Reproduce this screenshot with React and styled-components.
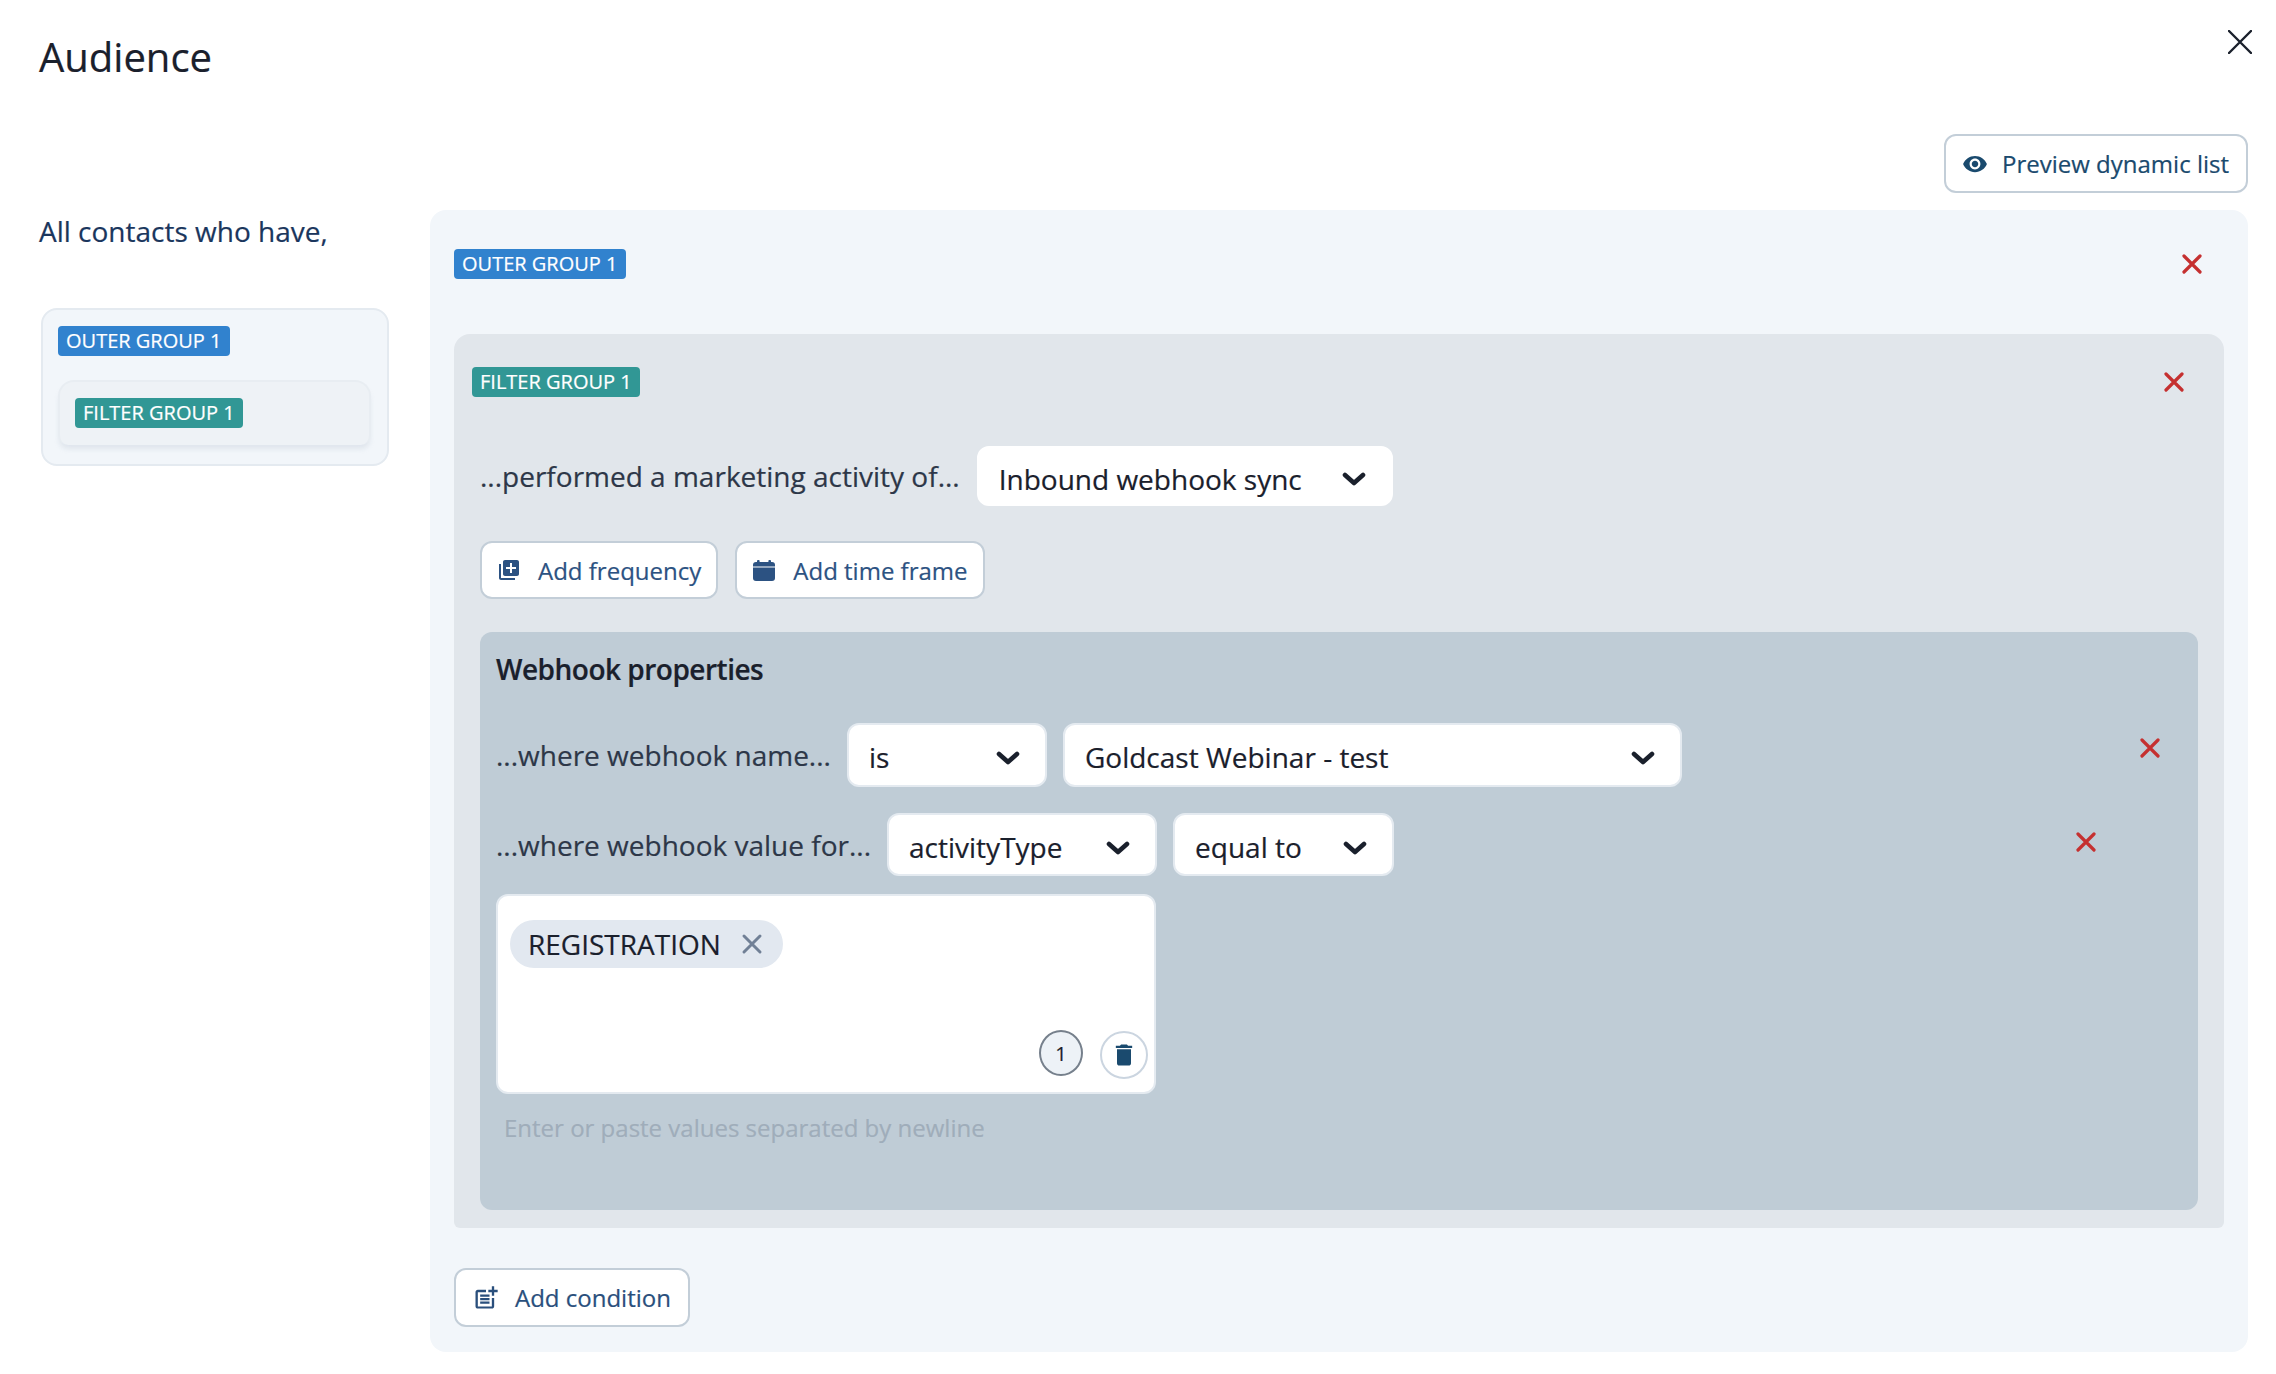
import React from 'react';
import styled, { createGlobalStyle } from 'styled-components';
import { MdLibraryAdd, MdOutlinePostAdd, MdDelete, MdRemoveRedEye } from 'react-icons/md';

const Global = createGlobalStyle`
  html, body { margin: 0; padding: 0; background: #fff; }
  body {
    font-family: "Open Sans", "Noto Sans", sans-serif;
    color: #2d3748;
    -webkit-text-stroke: 0.2px currentColor;
  }
  * { box-sizing: border-box; }
`;

const Page = styled.div`
  position: relative;
  width: 2276px;
  height: 1374px;
  padding: 30px 28px 22px 39px;
  overflow: hidden;
`;
const Title = styled.h1`
  margin: 0;
  font-size: 40px;
  line-height: 54px;
  font-weight: 500;
  color: #1a202c;
`;
const CloseButton = styled.button`
  position: absolute;
  top: 30px;
  right: 24px;
  width: 24px;
  height: 24px;
  padding: 0;
  border: 0;
  background: none;
  color: #1a202c;
  display: flex;
`;
const Toolbar = styled.div`
  display: flex;
  justify-content: flex-end;
  margin: 50px 0 17px;
`;
const OutlineButton = styled.button`
  display: inline-flex;
  align-items: center;
  height: ${p => p.$h || 59}px;
  padding: 0 ${p => p.$right || 15}px 0 ${p => p.$left || 15}px;
  border: 2px solid #c3ced8;
  border-radius: 12px;
  background: #fff;
  font-family: inherit;
  font-size: 24px;
  font-weight: ${p => p.$weight || 400};
  color: ${p => p.$color || '#2c5282'};
  white-space: nowrap;
  svg { flex: none; }
`;
const IconGap = styled.span`
  display: inline-flex;
  margin-right: ${p => p.$gap}px;
`;
const Columns = styled.div`
  display: flex;
  gap: 41px;
`;
const Sidebar = styled.aside`
  flex: none;
  width: 350px;
  padding-top: 2px;
`;
const Lead = styled.p`
  margin: 0 0 58px;
  font-size: 28px;
  line-height: 38px;
  font-weight: 500;
  color: #1a365d;
`;
const SummaryCard = styled.div`
  margin-left: 2px;
  height: 158px;
  padding: 16px 16px 0 15px;
  background: #f2f6fa;
  border: 2px solid #e4eaf0;
  border-radius: 16px;
`;
const SummaryFilter = styled.div`
  margin-top: 24px;
  height: 65px;
  padding: 16px 15px;
  background: #eef2f6;
  border: 2px solid #e8edf2;
  border-bottom: 0;
  border-radius: 16px 16px 10px 10px;
  box-shadow: 0 5px 5px -1px rgba(160, 175, 190, 0.22);
`;
const Tag = styled.span`
  display: inline-flex;
  align-items: center;
  height: 30px;
  padding: 0 8px 2px;
  border-radius: 4px;
  background: ${p => p.$bg};
  color: #fff;
  font-size: 20px;
  font-weight: 500;
  white-space: nowrap;
`;
const MainPanel = styled.main`
  flex: 1;
  height: 1142px;
  padding: 39px 24px 25px;
  background: #f2f6fa;
  border-radius: 16px;
`;
const PanelHead = styled.div`
  display: flex;
  align-items: center;
  justify-content: space-between;
  padding-right: ${p => p.$right}px;
`;
const RemoveIcon = styled.svg`
  flex: none;
  width: 20px;
  height: 20px;
  color: #c53030;
`;
const FilterPanel = styled.section`
  margin-top: 55px;
  padding: 33px 26px 18px 18px;
  background: #e1e6eb;
  border-radius: 16px 16px 6px 6px;
`;
const FilterBody = styled.div`
  padding-left: 8px;
`;
const ActivityRow = styled.div`
  display: flex;
  align-items: center;
  gap: 17px;
  margin-top: 49px;
`;
const Label = styled.span`
  font-size: 28px;
  line-height: 38px;
  color: #2d3748;
  white-space: nowrap;
`;
const SelectBox = styled.div`
  flex: none;
  display: flex;
  align-items: center;
  justify-content: space-between;
  width: ${p => p.$w}px;
  height: ${p => p.$h || 60}px;
  padding: 0 25px 0 20px;
  background: #fff;
  border: 2px solid ${p => p.$edge || '#fff'};
  border-radius: 12px;
  font-size: 28px;
  color: #1a202c;
`;
const SelectText = styled.span`
  position: relative;
  top: ${p => p.$top}px;
  white-space: nowrap;
`;
const Chevron = styled.svg`
  flex: none;
  width: 24px;
  height: 16px;
  color: #1a202c;
  transform: translateY(3px);
`;
const ButtonRow = styled.div`
  display: flex;
  gap: 17px;
  margin-top: 35px;
`;
const WebhookPanel = styled.div`
  margin-top: 33px;
  height: 578px;
  padding: 18px 0 0 16px;
  background: #bfccd6;
  border-radius: 12px;
`;
const WebhookTitle = styled.h3`
  margin: 0;
  font-size: 28px;
  line-height: 38px;
  font-weight: 600;
  letter-spacing: -0.5px;
  color: #1a202c;
`;
const PropRow = styled.div`
  display: flex;
  align-items: center;
  gap: 16px;
  margin-top: ${p => p.$top}px;
`;
const RowRemove = styled.div`
  display: flex;
  margin-left: auto;
  margin-right: ${p => p.$right}px;
  transform: translateY(${p => p.$shift}px);
`;
const ValueBox = styled.div`
  position: relative;
  width: 660px;
  height: 200px;
  margin-top: 18px;
  padding: 24px 12px;
  background: #fff;
  border: 2px solid #e4eaf0;
  border-radius: 12px;
`;
const Chip = styled.span`
  display: inline-flex;
  align-items: center;
  height: 48px;
  padding: 0 20px 0 18px;
  gap: 20px;
  background: #e2e8f0;
  border-radius: 24px;
  font-size: 28px;
  color: #1a202c;
`;
const ChipClose = styled.svg`
  width: 22px;
  height: 22px;
  color: #718096;
`;
const BoxActions = styled.div`
  position: absolute;
  right: 6px;
  bottom: 13px;
  display: flex;
  align-items: flex-start;
  gap: 17px;
`;
const CountBadge = styled.span`
  display: flex;
  align-items: center;
  justify-content: center;
  width: 44px;
  height: 46px;
  margin-top: -1px;
  border: 2px solid #76808c;
  border-radius: 50%;
  background: #edf2f7;
  font-size: 20px;
  color: #1a202c;
`;
const TrashButton = styled.span`
  display: flex;
  align-items: center;
  justify-content: center;
  width: 48px;
  height: 48px;
  border: 2px solid #cbd5e0;
  border-radius: 50%;
  background: #fff;
  color: #1a4a6e;
`;
const Hint = styled.p`
  margin: 17px 0 0 8px;
  font-size: 24px;
  line-height: 34px;
  color: #9fadba;
`;
const Foot = styled.div`
  margin-top: 40px;
  display: flex;
`;

const Remove = () => (
  <RemoveIcon viewBox="0 0 20 20" fill="none" stroke="currentColor" strokeWidth="3.2" strokeLinecap="round">
    <path d="M2 2 L18 18 M18 2 L2 18" />
  </RemoveIcon>
);
const Down = () => (
  <Chevron viewBox="0 0 24 16" fill="none" stroke="currentColor" strokeWidth="4.6" strokeLinecap="round" strokeLinejoin="round">
    <path d="M3 4 L12 12 L21 4" />
  </Chevron>
);
const CalendarIcon = () => (
  <svg width="22" height="21" viewBox="0 0 22 21" fill="currentColor">
    <rect x="4" y="0" width="2.6" height="4" rx="1" />
    <rect x="15.4" y="0" width="2.6" height="4" rx="1" />
    <path d="M0 5 a3 3 0 0 1 3 -3 h16 a3 3 0 0 1 3 3 v1.6 h-22 z" />
    <path d="M0 7.6 h22 v10.4 a3 3 0 0 1 -3 3 h-16 a3 3 0 0 1 -3 -3 z" />
  </svg>
);
const Select = ({ w, h, edge, children }) => (
  <SelectBox $w={w} $h={h} $edge={edge}>
    <SelectText $top={h ? 2 : 3}>{children}</SelectText>
    <Down />
  </SelectBox>
);

export default function App() {
  return (
    <Page>
      <Global />
      <Title>Audience</Title>
      <CloseButton aria-label="Close">
        <svg width="24" height="24" viewBox="0 0 24 24" fill="none" stroke="currentColor" strokeWidth="2.4" strokeLinecap="round">
          <path d="M1 1 L23 23 M23 1 L1 23" />
        </svg>
      </CloseButton>
      <Toolbar>
        <OutlineButton $weight={500} $color="#1a4a6e" $left={16} $right={17}>
          <IconGap $gap={14}><MdRemoveRedEye size={26} /></IconGap>
          Preview dynamic list
        </OutlineButton>
      </Toolbar>
      <Columns>
        <Sidebar>
          <Lead>All contacts who have,</Lead>
          <SummaryCard>
            <Tag $bg="#3182ce">OUTER GROUP 1</Tag>
            <SummaryFilter>
              <Tag $bg="#319795">FILTER GROUP 1</Tag>
            </SummaryFilter>
          </SummaryCard>
        </Sidebar>
        <MainPanel>
          <PanelHead $right={22}>
            <Tag $bg="#3182ce">OUTER GROUP 1</Tag>
            <Remove />
          </PanelHead>
          <FilterPanel>
            <PanelHead $right={14}>
              <Tag $bg="#319795">FILTER GROUP 1</Tag>
              <Remove />
            </PanelHead>
            <FilterBody>
              <ActivityRow>
                <Label>...performed a marketing activity of...</Label>
                <Select w={416}>Inbound webhook sync</Select>
              </ActivityRow>
              <ButtonRow>
                <OutlineButton $h={58}>
                  <IconGap $gap={17}><MdLibraryAdd size={24} /></IconGap>
                  Add frequency
                </OutlineButton>
                <OutlineButton $h={58} $left={16}>
                  <IconGap $gap={18}><CalendarIcon /></IconGap>
                  Add time frame
                </OutlineButton>
              </ButtonRow>
              <WebhookPanel>
                <WebhookTitle>Webhook properties</WebhookTitle>
                <PropRow $top={35}>
                  <Label>...where webhook name...</Label>
                  <Select w={200} h={64} edge="#e4eaf0">is</Select>
                  <Select w={619} h={64} edge="#e4eaf0">Goldcast Webinar - test</Select>
                  <RowRemove $right={38} $shift={-7}><Remove /></RowRemove>
                </PropRow>
                <PropRow $top={26}>
                  <Label>...where webhook value for...</Label>
                  <Select w={270} h={63} edge="#e4eaf0">activityType</Select>
                  <Select w={221} h={63} edge="#e4eaf0">equal to</Select>
                  <RowRemove $right={102} $shift={-3}><Remove /></RowRemove>
                </PropRow>
                <ValueBox>
                  <Chip>
                    REGISTRATION
                    <ChipClose viewBox="0 0 22 22" fill="none" stroke="currentColor" strokeWidth="3" strokeLinecap="round">
                      <path d="M3 3 L19 19 M19 3 L3 19" />
                    </ChipClose>
                  </Chip>
                  <BoxActions>
                    <CountBadge>1</CountBadge>
                    <TrashButton><MdDelete size={28} /></TrashButton>
                  </BoxActions>
                </ValueBox>
                <Hint>Enter or paste values separated by newline</Hint>
              </WebhookPanel>
            </FilterBody>
          </FilterPanel>
          <Foot>
            <OutlineButton $weight={500} $color="#2a4f7c" $left={16} $right={17}>
              <IconGap $gap={15}><MdOutlinePostAdd size={28} /></IconGap>
              Add condition
            </OutlineButton>
          </Foot>
        </MainPanel>
      </Columns>
    </Page>
  );
}
